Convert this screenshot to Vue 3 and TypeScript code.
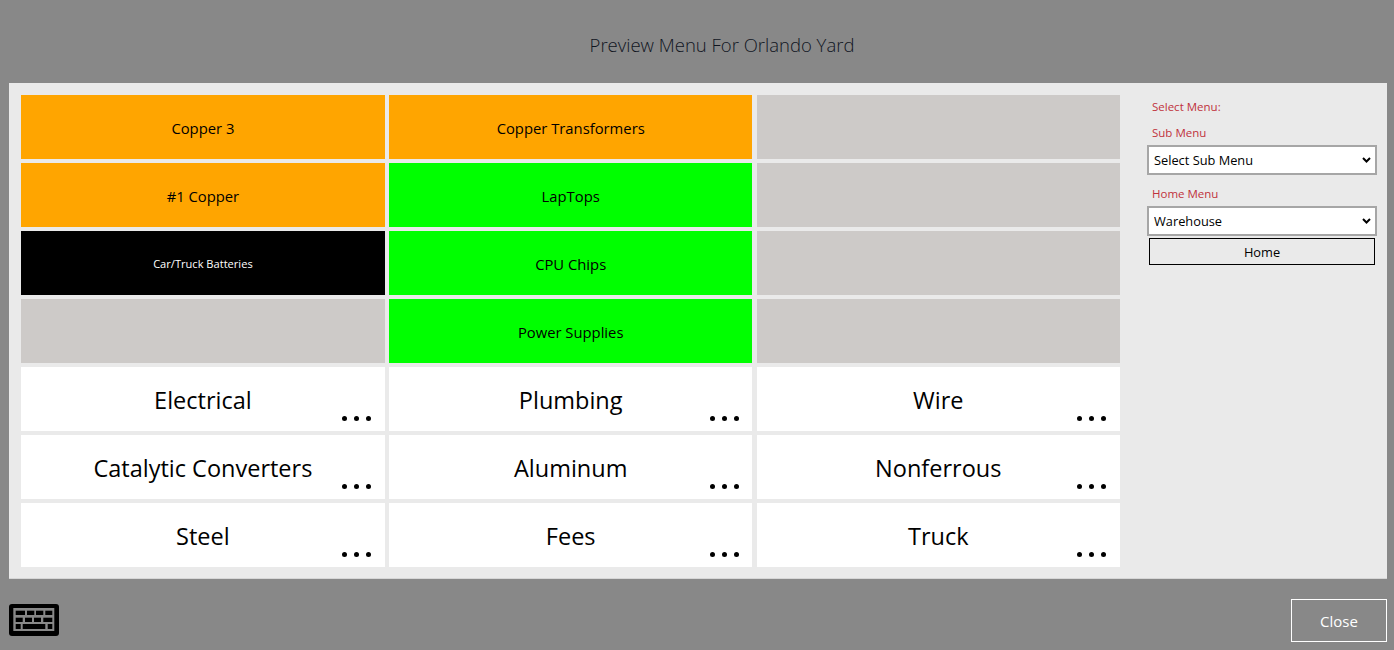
<script setup lang="ts">
import { ref } from 'vue'

interface Tile {
  label: string
  kind: 'orange' | 'green' | 'black' | 'empty' | 'category'
}

// filled column by column in the real screen, listed row by row here
const tiles: Tile[] = [
  { label: 'Copper 3', kind: 'orange' },
  { label: 'Copper Transformers', kind: 'orange' },
  { label: '', kind: 'empty' },
  { label: '#1 Copper', kind: 'orange' },
  { label: 'LapTops', kind: 'green' },
  { label: '', kind: 'empty' },
  { label: 'Car/Truck Batteries', kind: 'black' },
  { label: 'CPU Chips', kind: 'green' },
  { label: '', kind: 'empty' },
  { label: '', kind: 'empty' },
  { label: 'Power Supplies', kind: 'green' },
  { label: '', kind: 'empty' },
  { label: 'Electrical', kind: 'category' },
  { label: 'Plumbing', kind: 'category' },
  { label: 'Wire', kind: 'category' },
  { label: 'Catalytic Converters', kind: 'category' },
  { label: 'Aluminum', kind: 'category' },
  { label: 'Nonferrous', kind: 'category' },
  { label: 'Steel', kind: 'category' },
  { label: 'Fees', kind: 'category' },
  { label: 'Truck', kind: 'category' },
]

const subMenu = ref('Select Sub Menu')
const homeMenu = ref('Warehouse')
</script>

<template>
  <div class="overlay">
    <h1 class="title">Preview Menu For Orlando Yard</h1>
    <div class="panel">
      <div class="tiles">
        <div v-for="(tile, i) in tiles" :key="i" class="tile" :class="tile.kind">
          {{ tile.label }}
          <span v-if="tile.kind === 'category'" class="dots"><i></i><i></i><i></i></span>
        </div>
      </div>
      <div class="side">
        <div class="side-label first">Select Menu:</div>
        <div class="side-label sub-label">Sub Menu</div>
        <div class="select-wrap">
          <select v-model="subMenu" class="side-select">
            <option>Select Sub Menu</option>
          </select>
          <svg class="chevron" width="9" height="6" viewBox="0 0 9 6"><path d="M1 1l3.500 3.500L8 1" fill="none" stroke="#000" stroke-width="2" /></svg>
        </div>
        <div class="side-label home-label">Home Menu</div>
        <div class="select-wrap">
          <select v-model="homeMenu" class="side-select">
            <option>Warehouse</option>
          </select>
          <svg class="chevron" width="9" height="6" viewBox="0 0 9 6"><path d="M1 1l3.500 3.500L8 1" fill="none" stroke="#000" stroke-width="2" /></svg>
        </div>
        <button class="home-btn">Home</button>
      </div>
    </div>
    <div class="footer">
      <svg class="keyboard" width="50" height="32" viewBox="0 0 50 32">
        <rect width="50" height="32" rx="3" fill="#000" />
        <rect x="4.300" y="4" width="41" height="23" fill="#888" />
        <g fill="#000">
          <rect x="6.700" y="6.700" width="9.300" height="4.300" />
          <rect x="18" y="6.700" width="7.300" height="4.300" />
          <rect x="27" y="6.700" width="7.300" height="4.300" />
          <rect x="36.300" y="6.700" width="7" height="4.300" />
          <rect x="6.700" y="13.700" width="7" height="4.300" />
          <rect x="16" y="13.700" width="7" height="4.300" />
          <rect x="25" y="13.700" width="7" height="4.300" />
          <rect x="34.300" y="13.700" width="9" height="4.300" />
          <rect x="6.700" y="20" width="5" height="5" />
          <rect x="13.700" y="20" width="22.600" height="5" />
          <rect x="38.700" y="20" width="4.600" height="5" />
        </g>
      </svg>
      <button class="close-btn">Close</button>
    </div>
  </div>
</template>

<style>
html, body {
  margin: 0;
  background: #888888;
}
</style>

<style scoped>
.overlay {
  height: 650px;
  box-sizing: border-box;
  background: #888888;
  font-family: "Open Sans", "Noto Sans", sans-serif;
  display: flex;
  flex-direction: column;
  overflow: hidden;
}

.title {
  margin: 0;
  height: 83px;
  box-sizing: border-box;
  padding: 32px 0 0 50px;
  text-align: center;
  font-size: 18.5px;
  line-height: 26px;
  font-weight: 300;
  color: #10151f;
}

.panel {
  margin: 0 7px 0 9px;
  height: 496px;
  box-sizing: border-box;
  padding: 12px 10px 12px 12px;
  background: #eaeaea;
  border-bottom: 1px solid #d6d6d6;
  display: flex;
}

.tiles {
  width: 1099px;
  display: grid;
  grid-template-columns: 363.8px 363.4px 363.4px;
  column-gap: 4.2px;
  grid-auto-rows: 64px;
  row-gap: 4px;
}

.tile {
  position: relative;
  display: flex;
  align-items: center;
  justify-content: center;
  box-sizing: border-box;
  padding-top: 2px;
  font-size: 14.8px;
  color: #000;
}

.orange { background: #ffa500; }
.green { background: #00ff00; }
.empty { background: #cdcac8; }

.black {
  background: #000;
  color: #fff;
  font-size: 11.1px;
  padding-top: 0;
}

.category {
  background: #fff;
  font-size: 23.5px;
}

.dots {
  position: absolute;
  right: 13.500px;
  bottom: 10.500px;
  display: flex;
  gap: 7px;
}

.dots i {
  width: 5px;
  height: 5px;
  border-radius: 50%;
  background: #000;
}

.side {
  margin-left: 27px;
  width: 230px;
  display: flex;
  flex-direction: column;
}

.side-label {
  font-size: 11.500px;
  line-height: 15px;
  color: #c0323c;
  padding-left: 5px;
  margin-top: 11px;
  margin-bottom: 4px;
}

.side-label.first {
  margin-top: 4px;
  margin-bottom: 0;
}

.side-label.sub-label {
  margin-bottom: 5px;
}

.side-label.home-label {
  margin-top: 11px;
  margin-bottom: 5px;
}

.select-wrap {
  position: relative;
  height: 30px;
}

.side-select {
  display: block;
  width: 230px;
  height: 30px;
  box-sizing: border-box;
  border: 2px solid #a6a6a6;
  border-radius: 0;
  background: #fff;
  color: #000;
  padding: 0 0 0 5px;
  font-family: inherit;
  font-size: 12.800px;
  appearance: none;
}

.chevron {
  position: absolute;
  right: 6px;
  top: 12px;
  pointer-events: none;
}

.home-btn {
  margin: 2px 0 0 2px;
  width: 226px;
  height: 27px;
  box-sizing: border-box;
  border: 1px solid #000;
  background: transparent;
  color: #000;
  font-family: inherit;
  font-size: 12.800px;
  padding: 0;
}

.footer {
  flex: 1;
  display: flex;
  justify-content: space-between;
  align-items: flex-start;
  padding: 20px 7px 0 9px;
  position: relative;
}

.keyboard {
  margin-top: 5px;
  display: block;
}

.close-btn {
  width: 96px;
  height: 43px;
  box-sizing: border-box;
  border: 1px solid #fff;
  background: transparent;
  color: #fff;
  font-family: inherit;
  font-size: 15px;
  padding: 0;
}
</style>
